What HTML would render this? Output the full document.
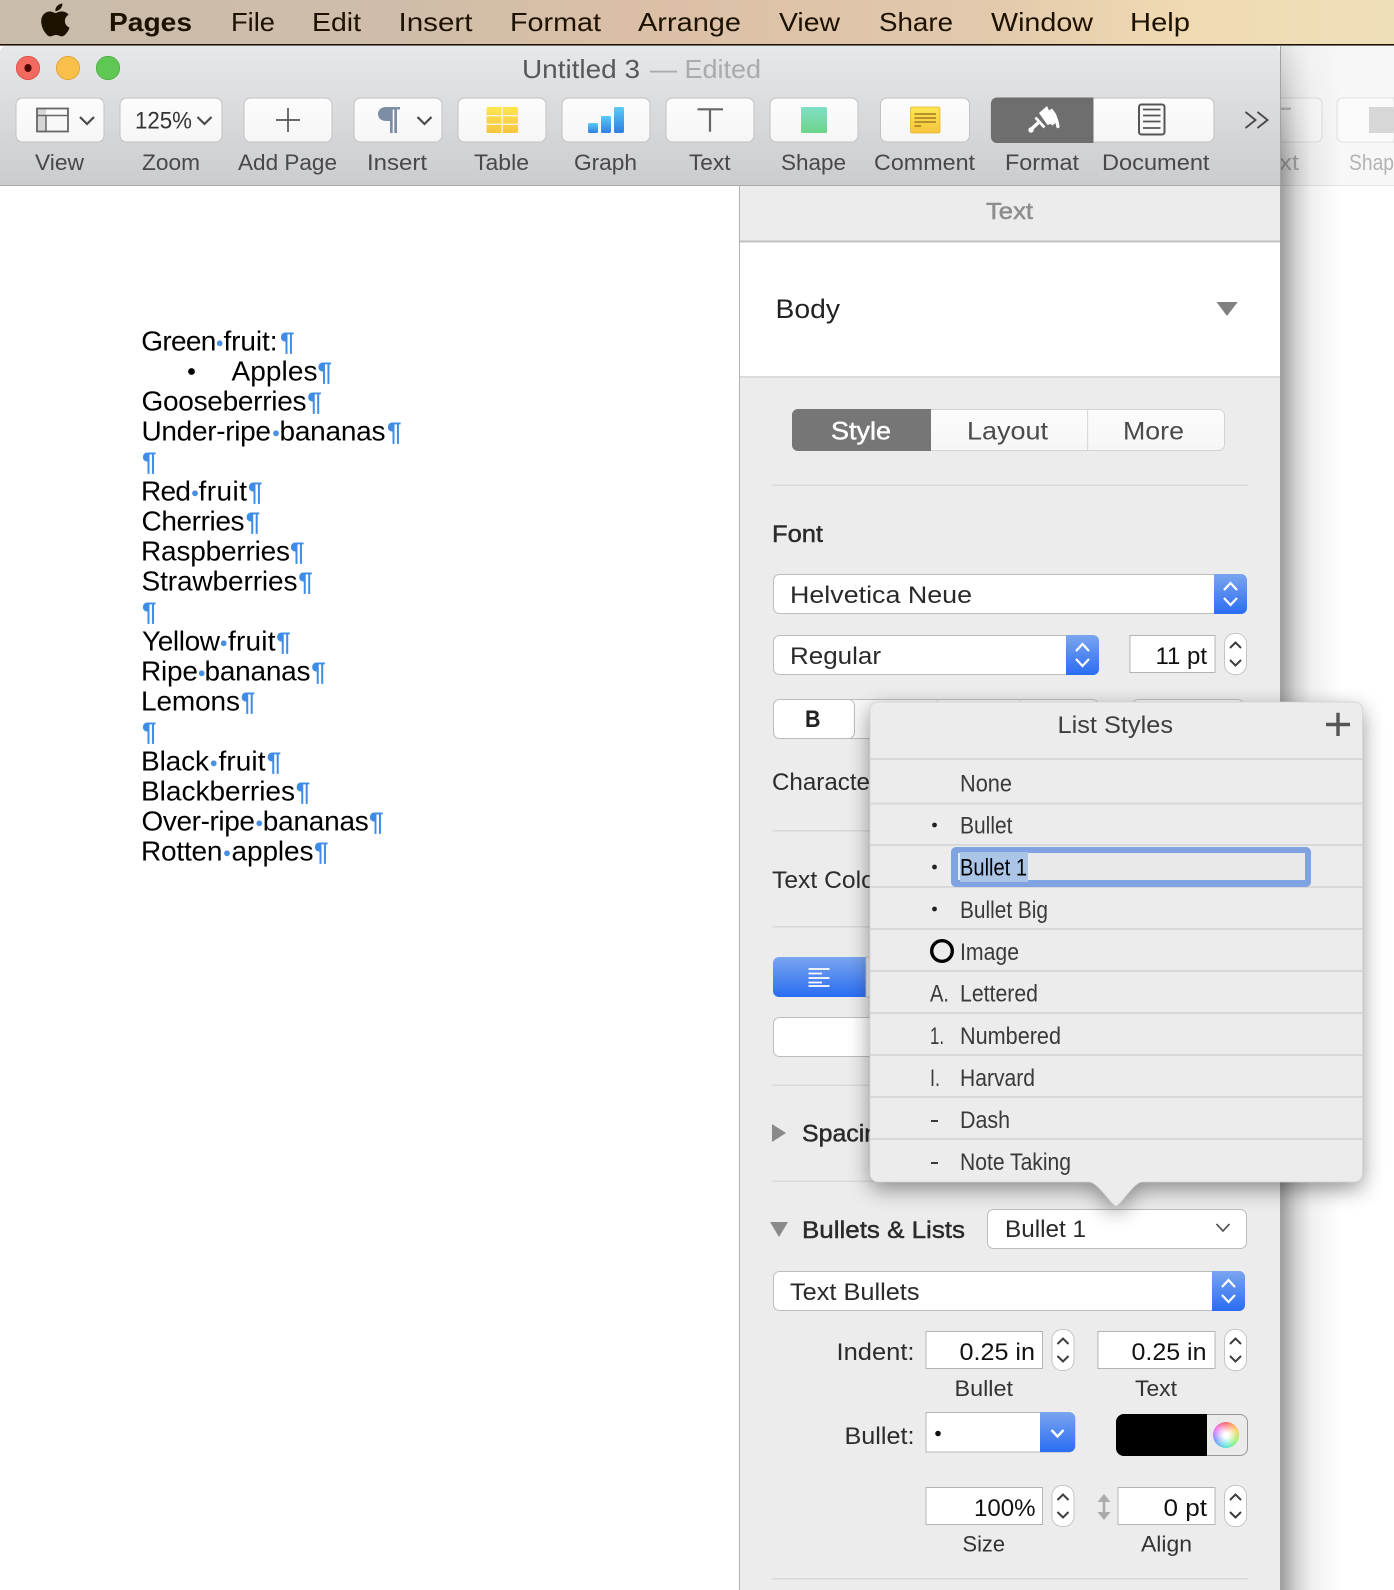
<!DOCTYPE html>
<html><head><meta charset="utf-8"><title>Pages</title>
<style>
html,body{margin:0;padding:0;background:#fff;overflow:hidden}
body{position:relative;width:1394px;height:1590px;overflow:hidden}
svg{position:absolute;left:0;top:0;display:block}
text{font-family:"Liberation Sans",sans-serif}
.m{font-size:26px;fill:#1d1100}
.l{font-size:22px;fill:#48484a}
.p{font-size:24px;fill:#2c2c2c}
.v{font-size:24.5px;fill:#111}
.r{font-size:24px;fill:#3a3a3a}
.h{font-size:24px;fill:#2a2a2a;stroke:#2a2a2a;stroke-width:.45px}
.d{font-size:28px;fill:#000}
.q{font-size:26px;fill:#3f8ce6;font-weight:bold}
.o{fill:#4a90e2}
#wheel{position:absolute;left:1213px;top:1422px;width:26px;height:26px;border-radius:50%;background:radial-gradient(circle,#fff 0 12%,rgba(255,255,255,0) 88%),conic-gradient(#f33 0deg,#fb2 60deg,#7e3 120deg,#2dc 180deg,#47f 240deg,#d4e 300deg,#f33 360deg)}
</style></head><body>
<svg width="1394" height="1590" viewBox="0 0 1394 1590" xmlns="http://www.w3.org/2000/svg">
<defs>
<linearGradient id="menu" x1="0" x2="1" y1="0" y2="0"><stop offset="0" stop-color="#c9bcaa"/><stop offset=".28" stop-color="#cfbda9"/><stop offset=".45" stop-color="#dabfa6"/><stop offset=".7" stop-color="#e2c8ac"/><stop offset=".85" stop-color="#f0dab2"/><stop offset="1" stop-color="#efdfb9"/></linearGradient>
<linearGradient id="tb" x1="0" x2="0" y1="0" y2="1"><stop offset="0" stop-color="#e7e8ea"/><stop offset="1" stop-color="#cbccce"/></linearGradient>
<linearGradient id="btn" x1="0" x2="0" y1="0" y2="1"><stop offset="0" stop-color="#fcfcfc"/><stop offset="1" stop-color="#f6f6f6"/></linearGradient>
<linearGradient id="blue" x1="0" x2="0" y1="0" y2="1"><stop offset="0" stop-color="#7aa5ef"/><stop offset="1" stop-color="#2a6df3"/></linearGradient>
<linearGradient id="yel" x1="0" x2="0" y1="0" y2="1"><stop offset="0" stop-color="#fee64f"/><stop offset="1" stop-color="#f7c53f"/></linearGradient>
<linearGradient id="bar" x1="0" x2="0" y1="0" y2="1"><stop offset="0" stop-color="#5ccaf6"/><stop offset="1" stop-color="#2e7fe0"/></linearGradient>
<linearGradient id="grn" x1="0" x2="0" y1="0" y2="1"><stop offset="0" stop-color="#80e0c6"/><stop offset="1" stop-color="#6bd488"/></linearGradient>
<linearGradient id="sh" gradientUnits="userSpaceOnUse" x1="1281" x2="1341" y1="0" y2="0"><stop offset="0" stop-color="#000" stop-opacity=".38"/><stop offset=".1" stop-color="#000" stop-opacity=".3"/><stop offset=".25" stop-color="#000" stop-opacity=".18"/><stop offset=".5" stop-color="#000" stop-opacity=".06"/><stop offset="1" stop-color="#000" stop-opacity="0"/></linearGradient>
<linearGradient id="fade" gradientUnits="userSpaceOnUse" x1="0" x2="0" y1="46" y2="170"><stop offset="0" stop-color="#fff" stop-opacity=".25"/><stop offset="1" stop-color="#fff" stop-opacity="1"/></linearGradient>
<mask id="fm" maskUnits="userSpaceOnUse" x="1281" y="46" width="113" height="1544"><rect x="1281" y="46" width="113" height="1544" fill="url(#fade)"/></mask>
<filter id="b2" x="-20%" y="-20%" width="140%" height="140%"><feGaussianBlur stdDeviation="11"/></filter>
<g id="st"><rect x=".5" y=".5" width="22" height="41" rx="10" fill="#fff" stroke="#c4c4c4"/><path d="M6 15L11.5 9.5L17 15M6 27L11.5 32.5L17 27" fill="none" stroke="#3c3c3c" stroke-width="2"/></g>
<path id="ud" d="M0 7L6.5 0L13 7M0 15L6.5 22L13 15" fill="none" stroke="#fff" stroke-width="2.2"/>
<path id="ch" d="M0 0L7 7L14 0" fill="none" stroke="#4a4a4a" stroke-width="2.2"/>
</defs>

<!-- desktop / ghost window -->
<rect width="1394" height="1590" fill="#fff"/>
<rect x="1270" y="46" width="124" height="139" fill="#f7f7f7"/>
<rect x="1270" y="185" width="124" height="1" fill="#e4e4e4"/>
<rect x="1240" y="98" width="82" height="44" rx="6" fill="#fbfbfb" stroke="#dfdfdf"/>
<path d="M1394 98H1343a6 6 0 0 0-6 6V136a6 6 0 0 0 6 6H1394Z" fill="#fbfbfb" stroke="#dfdfdf"/>
<rect x="1369" y="107" width="25" height="26" fill="#d7d7d7"/>
<rect x="1279" y="107.5" width="12" height="2.5" fill="#c6c6c6"/>
<text x="1279" y="170" class="l" style="fill:#b4b4b4" textLength="20" lengthAdjust="spacingAndGlyphs">xt</text>
<text x="1349" y="170" class="l" style="fill:#b4b4b4" textLength="45" lengthAdjust="spacingAndGlyphs">Shap</text>

<!-- main window shadow -->
<rect x="1281" y="46" width="113" height="1544" fill="url(#sh)" mask="url(#fm)"/>

<!-- menu bar -->
<rect width="1394" height="44" fill="url(#menu)"/>
<rect y="44" width="1394" height="1.6" fill="#1a1208"/>
<path transform="translate(38 3.5) scale(1.45 1.37)" fill="#1d1100" d="M12.152 6.896c-.948 0-2.415-1.078-3.96-1.04-2.04.027-3.91 1.183-4.961 3.014-2.117 3.675-.546 9.103 1.519 12.09 1.013 1.454 2.208 3.09 3.792 3.039 1.52-.065 2.09-.987 3.935-.987 1.831 0 2.35.987 3.96.948 1.637-.026 2.676-1.48 3.676-2.948 1.156-1.688 1.636-3.325 1.662-3.415-.039-.013-3.182-1.221-3.22-4.857-.026-3.04 2.48-4.494 2.597-4.559-1.429-2.09-3.623-2.324-4.39-2.376-2-.156-3.675 1.09-4.61 1.09zM15.53 3.83c.843-1.012 1.4-2.427 1.245-3.83-1.207.052-2.662.805-3.532 1.818-.78.896-1.454 2.338-1.273 3.714 1.338.104 2.715-.688 3.559-1.701"/>
<text x="109" y="31" class="m" font-weight="bold" textLength="83" lengthAdjust="spacingAndGlyphs">Pages</text>
<text x="231" y="31" class="m" textLength="44" lengthAdjust="spacingAndGlyphs">File</text>
<text x="312" y="31" class="m" textLength="49" lengthAdjust="spacingAndGlyphs">Edit</text>
<text x="398.5" y="31" class="m" textLength="74" lengthAdjust="spacingAndGlyphs">Insert</text>
<text x="510" y="31" class="m" textLength="91" lengthAdjust="spacingAndGlyphs">Format</text>
<text x="638" y="31" class="m" textLength="103" lengthAdjust="spacingAndGlyphs">Arrange</text>
<text x="779" y="31" class="m" textLength="61" lengthAdjust="spacingAndGlyphs">View</text>
<text x="879" y="31" class="m" textLength="74" lengthAdjust="spacingAndGlyphs">Share</text>
<text x="991" y="31" class="m" textLength="102" lengthAdjust="spacingAndGlyphs">Window</text>
<text x="1130" y="31" class="m" textLength="60" lengthAdjust="spacingAndGlyphs">Help</text>

<!-- window body -->
<path d="M0 186V52a6 6 0 0 1 6-6H1274a6 6 0 0 1 6 6V186Z" fill="url(#tb)"/>
<rect y="185" width="1280" height="1.4" fill="#a9a9a9"/>
<rect y="186" width="739" height="1404" fill="#fff"/>
<rect x="739" y="186" width="1.4" height="1404" fill="#b3b3b3"/>
<rect x="740" y="186" width="540" height="1404" fill="#ececec"/>
<rect x="1280" y="46" width="1" height="1544" fill="#a2a2a2"/>

<!-- traffic lights -->
<circle cx="28" cy="68" r="11.6" fill="#f4695f" stroke="#e0524a"/><ellipse cx="28" cy="68" rx="3.6" ry="4" fill="#4d0705"/>
<circle cx="68" cy="68" r="11.6" fill="#f8bf4b" stroke="#e2a63a"/>
<circle cx="108" cy="68" r="11.6" fill="#5fc854" stroke="#4fb143"/>
<text x="522" y="78" font-size="26" fill="#57585a" textLength="118" lengthAdjust="spacingAndGlyphs">Untitled 3</text>
<text x="650" y="78" font-size="26" fill="#a9aaac" textLength="111" lengthAdjust="spacingAndGlyphs">— Edited</text>

<!-- toolbar buttons -->
<g fill="url(#btn)" stroke="#c2c2c2">
<rect x="16" y="98" width="88" height="44" rx="6.5"/>
<rect x="120" y="98" width="102" height="44" rx="6.5"/>
<rect x="244" y="98" width="88" height="44" rx="6.5"/>
<rect x="354" y="98" width="88" height="44" rx="6.5"/>
<rect x="458" y="98" width="88" height="44" rx="6.5"/>
<rect x="562" y="98" width="88" height="44" rx="6.5"/>
<rect x="666" y="98" width="88" height="44" rx="6.5"/>
<rect x="770" y="98" width="88" height="44" rx="6.5"/>
<rect x="880.5" y="98" width="89" height="44" rx="6.5"/>
<rect x="991" y="98" width="223" height="44" rx="6.5"/>
</g>
<path d="M1093.5 97.5H997a6 6 0 0 0-6 6V137a6 6 0 0 0 6 6H1093.5Z" fill="#6e6e6e"/>

<!-- view icon -->
<rect x="37" y="108.5" width="9" height="23" fill="#d6d6d6"/>
<rect x="37" y="108.5" width="31" height="23" fill="none" stroke="#666" stroke-width="1.8"/>
<path d="M37 115.5H68M46 115.5V131.5" fill="none" stroke="#666" stroke-width="1.5"/>
<use href="#ch" x="80" y="117"/>
<text x="135" y="128.5" font-size="24" fill="#333" textLength="57" lengthAdjust="spacingAndGlyphs">125%</text>
<use href="#ch" x="197.5" y="117"/>
<path d="M288 108V132M276 120H300" stroke="#555" stroke-width="1.7" fill="none"/>
<!-- pilcrow icon -->
<path d="M400 107H385.5A7.5 7 0 0 0 385.5 121H390V133H392.7V109.5H394.3V133H397V109.5H400Z" fill="#7b8ea6"/>
<use href="#ch" x="417.5" y="117"/>
<!-- table -->
<rect x="486.5" y="107" width="31.5" height="26" rx="1.5" fill="url(#yel)"/>
<path d="M502.2 107V133M486.5 115.7H518M486.5 124.3H518" stroke="#fdf6d4" stroke-width="1.4"/>
<!-- graph -->
<rect x="588" y="123" width="10" height="10" rx="1.5" fill="url(#bar)"/>
<rect x="601" y="116" width="10" height="17" rx="1.5" fill="url(#bar)"/>
<rect x="614" y="107" width="10" height="26" rx="1.5" fill="url(#bar)"/>
<!-- T -->
<path d="M697.5 109.3H723M710 109.3V131.7" stroke="#666" stroke-width="2.2" fill="none"/>
<!-- shape -->
<rect x="801" y="107" width="26" height="26" rx="1.5" fill="url(#grn)"/>
<!-- comment -->
<rect x="910.5" y="107" width="29.5" height="26" rx="1.5" fill="url(#yel)" stroke="#ebb433" stroke-width=".8"/>
<path d="M914.5 114H936M914.5 118H936M914.5 122H936M914.5 126H921" stroke="#a07a22" stroke-width="1.6"/>
<!-- brush -->
<path fill="#fff" d="M1039 113L1047 106L1049 110.5L1052 108.5L1056 114L1058.5 121L1059.5 126A1.6 1.6 0 0 1 1056.3 127L1055.5 123L1052.5 125.5L1050.5 124L1047.5 125Z"/>
<path d="M1035.5 117.5L1044.5 127.5" stroke="#fff" stroke-width="2.8" fill="none"/>
<path d="M1038.5 122.5L1031.5 129" stroke="#fff" stroke-width="3.4" fill="none"/>
<circle cx="1031" cy="130" r="2.7" fill="#fff"/>
<!-- document -->
<rect x="1139" y="104.5" width="25.5" height="30" rx="2.5" fill="none" stroke="#555" stroke-width="2"/>
<path d="M1143 109.5H1160.5M1143 115.5H1160.5M1143 121.5H1160.5M1143 128H1160.5" stroke="#555" stroke-width="1.8"/>
<!-- overflow -->
<path d="M1245.5 112L1255.5 120L1245.5 128M1257.5 112L1267.5 120L1257.5 128" fill="none" stroke="#4a4a4a" stroke-width="1.9"/>

<!-- toolbar labels -->
<text x="35" y="170" class="l" textLength="49" lengthAdjust="spacingAndGlyphs">View</text>
<text x="142" y="170" class="l" textLength="58" lengthAdjust="spacingAndGlyphs">Zoom</text>
<text x="238" y="170" class="l" textLength="99" lengthAdjust="spacingAndGlyphs">Add Page</text>
<text x="367" y="170" class="l" textLength="60" lengthAdjust="spacingAndGlyphs">Insert</text>
<text x="474" y="170" class="l" textLength="55" lengthAdjust="spacingAndGlyphs">Table</text>
<text x="574" y="170" class="l" textLength="63" lengthAdjust="spacingAndGlyphs">Graph</text>
<text x="689" y="170" class="l" textLength="41.5" lengthAdjust="spacingAndGlyphs">Text</text>
<text x="781" y="170" class="l" textLength="65" lengthAdjust="spacingAndGlyphs">Shape</text>
<text x="874" y="170" class="l" textLength="101" lengthAdjust="spacingAndGlyphs">Comment</text>
<text x="1005" y="170" class="l" textLength="74" lengthAdjust="spacingAndGlyphs">Format</text>
<text x="1102" y="170" class="l" textLength="107.5" lengthAdjust="spacingAndGlyphs">Document</text>

<!-- document text -->
<g class="o">
<circle cx="219.7" cy="343.3" r="2.9"/>
<circle cx="276" cy="433.3" r="2.9"/>
<circle cx="195" cy="493.3" r="2.9"/>
<circle cx="223.7" cy="643.3" r="2.9"/>
<circle cx="201.7" cy="673.3" r="2.9"/>
<circle cx="213.7" cy="763.3" r="2.9"/>
<circle cx="259.3" cy="823.3" r="2.9"/>
<circle cx="227" cy="853.3" r="2.9"/>
</g>
<circle cx="191.5" cy="371.5" r="3.4" fill="#000"/>
<text class="d" x="141.3" y="350.7" textLength="75">Green</text><text class="d" x="223.5" y="350.7" textLength="54">fruit:</text><text class="q" x="280" y="350.7">¶</text>
<text class="d" x="231.5" y="380.7" textLength="86">Apples</text><text class="q" x="317.5" y="380.7">¶</text>
<text class="d" x="141.5" y="410.7" textLength="165">Gooseberries</text><text class="q" x="307.3" y="410.7">¶</text>
<text class="d" x="141.5" y="440.7" textLength="129.5">Under-ripe</text><text class="d" x="279.5" y="440.7" textLength="106">bananas</text><text class="q" x="387" y="440.7">¶</text>
<text class="q" x="142" y="470.7">¶</text>
<text class="d" x="141" y="500.7" textLength="50">Red</text><text class="d" x="198.5" y="500.7" textLength="48.5">fruit</text><text class="q" x="248" y="500.7">¶</text>
<text class="d" x="141.5" y="530.7" textLength="103">Cherries</text><text class="q" x="245.7" y="530.7">¶</text>
<text class="d" x="141" y="560.7" textLength="149">Raspberries</text><text class="q" x="290" y="560.7">¶</text>
<text class="d" x="141.5" y="590.7" textLength="156">Strawberries</text><text class="q" x="298.3" y="590.7">¶</text>
<text class="q" x="142" y="620.7">¶</text>
<text class="d" x="142" y="650.7" textLength="78">Yellow</text><text class="d" x="228" y="650.7" textLength="47.5">fruit</text><text class="q" x="276.3" y="650.7">¶</text>
<text class="d" x="141" y="680.7" textLength="57">Ripe</text><text class="d" x="204.5" y="680.7" textLength="106">bananas</text><text class="q" x="311.3" y="680.7">¶</text>
<text class="d" x="141" y="710.7" textLength="99">Lemons</text><text class="q" x="240.7" y="710.7">¶</text>
<text class="q" x="142" y="740.7">¶</text>
<text class="d" x="141" y="770.7" textLength="68">Black</text><text class="d" x="218.5" y="770.7" textLength="47">fruit</text><text class="q" x="266.7" y="770.7">¶</text>
<text class="d" x="141" y="800.7" textLength="154">Blackberries</text><text class="q" x="295.7" y="800.7">¶</text>
<text class="d" x="141.5" y="830.7" textLength="113.5">Over-ripe</text><text class="d" x="262.8" y="830.7" textLength="106">bananas</text><text class="q" x="369" y="830.7">¶</text>
<text class="d" x="141" y="860.7" textLength="81.5">Rotten</text><text class="d" x="231.5" y="860.7" textLength="82">apples</text><text class="q" x="314" y="860.7">¶</text>

<!-- panel -->
<text x="986" y="219" font-size="23" fill="#8d8d8f" stroke="#8d8d8f" stroke-width=".5" textLength="47" lengthAdjust="spacingAndGlyphs">Text</text>
<rect x="740" y="240.5" width="540" height="2" fill="#c0c1c3"/>
<rect x="740" y="242.5" width="540" height="134" fill="#fff"/>
<rect x="740" y="376" width="540" height="2" fill="#dcdcdc"/>
<text x="775.5" y="318" font-size="27" fill="#222" textLength="64.5" lengthAdjust="spacingAndGlyphs">Body</text>
<path d="M1216.5 302H1237.7L1227 316Z" fill="#808080"/>

<rect x="792.5" y="409.5" width="432" height="41" rx="6" fill="url(#btn)" stroke="#d3d3d3"/>
<path d="M931 409H798a6 6 0 0 0-6 6V445a6 6 0 0 0 6 6H931Z" fill="#767676"/>
<rect x="1087" y="410" width="1.2" height="40" fill="#dadada"/>
<text x="831" y="439.5" font-size="25" fill="#fff" stroke="#fff" stroke-width=".45" textLength="60" lengthAdjust="spacingAndGlyphs">Style</text>
<text x="967" y="439.5" font-size="25" fill="#4a4a4a" textLength="81" lengthAdjust="spacingAndGlyphs">Layout</text>
<text x="1123" y="439.5" font-size="25" fill="#4a4a4a" textLength="61" lengthAdjust="spacingAndGlyphs">More</text>
<rect x="772.5" y="484.5" width="475.5" height="1.6" fill="#dadada"/>
<text x="772" y="542" class="h" textLength="51" lengthAdjust="spacingAndGlyphs">Font</text>

<!-- font selects -->
<rect x="773.5" y="574.5" width="473" height="39" rx="6" fill="#fff" stroke="#bdbdbd"/>
<path d="M1214 574H1241a6 6 0 0 1 6 6V608a6 6 0 0 1-6 6H1214Z" fill="url(#blue)"/>
<use href="#ud" x="1224" y="583"/>
<text x="790" y="603" class="v" style="fill:#2a2a2a" textLength="182" lengthAdjust="spacingAndGlyphs">Helvetica Neue</text>
<rect x="773.5" y="635.5" width="325" height="39" rx="6" fill="#fff" stroke="#bdbdbd"/>
<path d="M1066 635H1093a6 6 0 0 1 6 6V669a6 6 0 0 1-6 6H1066Z" fill="url(#blue)"/>
<use href="#ud" x="1076" y="644"/>
<text x="790" y="664" class="v" style="fill:#2a2a2a" textLength="91" lengthAdjust="spacingAndGlyphs">Regular</text>
<rect x="1130" y="635.5" width="85" height="37" fill="#fff" stroke="#b4b4b4"/>
<text x="1155.5" y="664" class="v" textLength="51.5" lengthAdjust="spacingAndGlyphs">11 pt</text>
<use href="#st" x="1224" y="633"/>

<!-- B/I/U row -->
<rect x="773.5" y="699.5" width="325" height="39" rx="6" fill="#f8f8f8" stroke="#bdbdbd"/>
<rect x="773.5" y="699.5" width="81" height="39" rx="6" fill="#fff" stroke="#bdbdbd"/>
<rect x="937" y="699" width="1" height="4" fill="#cfcfcf"/>
<rect x="1019" y="699" width="1" height="4" fill="#cfcfcf"/>
<rect x="1132.5" y="699.5" width="111" height="39" rx="6" fill="#f8f8f8" stroke="#bdbdbd"/>
<text x="805" y="727" font-size="24" font-weight="bold" fill="#222" textLength="15.5" lengthAdjust="spacingAndGlyphs">B</text>

<text x="772" y="790" class="p" textLength="106" lengthAdjust="spacingAndGlyphs">Character</text>
<rect x="772.5" y="830" width="120" height="1.6" fill="#dadada"/>
<text x="772" y="888" class="p" textLength="111" lengthAdjust="spacingAndGlyphs">Text Color</text>
<rect x="772.5" y="926" width="120" height="1.6" fill="#dadada"/>

<path d="M866 957H779a6 6 0 0 0-6 6V991a6 6 0 0 0 6 6H866Z" fill="url(#blue)"/>
<path d="M808.5 969H829.5M808.5 973.5H822M808.5 978H829.5M808.5 982.5H822M808.5 986H829.5" stroke="#fff" stroke-width="1.8"/>
<rect x="866" y="957" width="20" height="40" fill="#f4f4f4" stroke="#c9c9c9"/>
<rect x="773.5" y="1017.5" width="130" height="39" rx="6" fill="#fff" stroke="#bdbdbd"/>
<rect x="772.5" y="1084.5" width="120" height="1.6" fill="#dadada"/>
<path d="M772 1124L786 1133L772 1142Z" fill="#8a8a8a"/>
<text x="802" y="1141.7" class="h" textLength="90" lengthAdjust="spacingAndGlyphs">Spacing</text>
<rect x="772.5" y="1180.5" width="475.5" height="1.6" fill="#dadada"/>

<!-- bullets & lists -->
<path d="M770 1222H788L779 1237Z" fill="#8a8a8a"/>
<text x="802" y="1238" class="h" textLength="163" lengthAdjust="spacingAndGlyphs">Bullets &amp; Lists</text>
<rect x="987.5" y="1209.5" width="259" height="39" rx="6" fill="#fff" stroke="#bdbdbd"/>
<text x="1005" y="1237" class="v" style="fill:#2a2a2a" textLength="81" lengthAdjust="spacingAndGlyphs">Bullet 1</text>
<path d="M1216.5 1224L1223 1231L1229.5 1224" fill="none" stroke="#555" stroke-width="1.7"/>

<rect x="773.5" y="1271.5" width="471" height="39" rx="6" fill="#fff" stroke="#bdbdbd"/>
<path d="M1212 1271H1239a6 6 0 0 1 6 6V1305a6 6 0 0 1-6 6H1212Z" fill="url(#blue)"/>
<use href="#ud" x="1222" y="1280"/>
<text x="790" y="1300" class="v" style="fill:#2a2a2a" textLength="129.5" lengthAdjust="spacingAndGlyphs">Text Bullets</text>

<text x="836.5" y="1360" class="p" textLength="78" lengthAdjust="spacingAndGlyphs">Indent:</text>
<rect x="926" y="1331.5" width="116.5" height="37" fill="#fff" stroke="#b4b4b4"/>
<text x="959.5" y="1360" class="v" textLength="75.5" lengthAdjust="spacingAndGlyphs">0.25 in</text>
<use href="#st" x="1051.5" y="1329"/>
<rect x="1098" y="1331.5" width="117" height="37" fill="#fff" stroke="#b4b4b4"/>
<text x="1131.5" y="1360" class="v" textLength="75" lengthAdjust="spacingAndGlyphs">0.25 in</text>
<use href="#st" x="1224" y="1329"/>
<text x="954.5" y="1396" font-size="22.5" fill="#333" textLength="58.5" lengthAdjust="spacingAndGlyphs">Bullet</text>
<text x="1135" y="1396" font-size="22.5" fill="#333" textLength="42" lengthAdjust="spacingAndGlyphs">Text</text>

<text x="844.5" y="1444" class="p" textLength="70" lengthAdjust="spacingAndGlyphs">Bullet:</text>
<path d="M926 1412.5H1069a6 6 0 0 1 6 6V1446a6 6 0 0 1-6 6H926Z" fill="#fff" stroke="#b4b4b4"/>
<path d="M1040 1412H1069a6 6 0 0 1 6 6V1446a6 6 0 0 1-6 6H1040Z" fill="url(#blue)"/>
<path d="M1051.5 1430L1057.5 1436.5L1063.5 1430" fill="none" stroke="#fff" stroke-width="2.4"/>
<circle cx="938" cy="1433.5" r="2.8" fill="#111"/>
<path d="M1124 1414.5H1240a7.5 7.5 0 0 1 7.5 7.5V1448a7.5 7.5 0 0 1-7.5 7.5H1124a7.5 7.5 0 0 1-7.5-7.5V1422a7.5 7.5 0 0 1 7.5-7.5Z" fill="#ebebeb" stroke="#989898"/>
<path d="M1207 1414H1124a8 8 0 0 0-8 8V1448a8 8 0 0 0 8 8H1207Z" fill="#000"/>

<rect x="926" y="1487.5" width="116.5" height="37" fill="#fff" stroke="#b4b4b4"/>
<text x="974" y="1516" class="v" textLength="61.5" lengthAdjust="spacingAndGlyphs">100%</text>
<use href="#st" x="1051.5" y="1485"/>
<path d="M1104 1494L1110.5 1502H1105.3V1512H1110.5L1104 1520L1097.5 1512H1102.7V1502H1097.5Z" fill="#ababab"/>
<rect x="1118" y="1487.5" width="97" height="37" fill="#fff" stroke="#b4b4b4"/>
<text x="1163.5" y="1516" class="v" textLength="43.5" lengthAdjust="spacingAndGlyphs">0 pt</text>
<use href="#st" x="1224" y="1485"/>
<text x="962.5" y="1551.7" font-size="22.5" fill="#333" textLength="42.5" lengthAdjust="spacingAndGlyphs">Size</text>
<text x="1141" y="1551.7" font-size="22.5" fill="#333" textLength="51" lengthAdjust="spacingAndGlyphs">Align</text>
<rect x="772.5" y="1578" width="475.5" height="1.6" fill="#dadada"/>

<!-- popover -->
<path transform="translate(0 7)" filter="url(#b2)" opacity=".42" fill="#000" d="M878 702H1354.5a8 8 0 0 1 8 8V1174a8 8 0 0 1-8 8H1142C1134 1182 1120 1206 1116 1206C1112 1206 1098 1182 1089 1182H878a8 8 0 0 1-8-8V710a8 8 0 0 1 8-8Z"/>
<path fill="#ececec" stroke="#d2d2d2" stroke-width=".7" d="M878 702H1354.5a8 8 0 0 1 8 8V1174a8 8 0 0 1-8 8H1142C1134 1182 1120 1206 1116 1206C1112 1206 1098 1182 1089 1182H878a8 8 0 0 1-8-8V710a8 8 0 0 1 8-8Z"/>
<text x="1057.5" y="733" font-size="24" fill="#3e3e3e" textLength="115.5" lengthAdjust="spacingAndGlyphs">List Styles</text>
<path d="M1338 712.7V736M1326 724.5H1350" stroke="#555" stroke-width="3.4"/>
<g fill="#d8d8d8">
<rect x="870" y="758" width="492.5" height="2"/>
<rect x="870" y="802.5" width="492.5" height="2"/>
<rect x="870" y="844" width="492.5" height="2"/>
<rect x="870" y="886" width="492.5" height="2"/>
<rect x="870" y="928" width="492.5" height="2"/>
<rect x="870" y="970" width="492.5" height="2"/>
<rect x="870" y="1012" width="492.5" height="2"/>
<rect x="870" y="1054" width="492.5" height="2"/>
<rect x="870" y="1096" width="492.5" height="2"/>
<rect x="870" y="1138" width="492.5" height="2"/>
</g>
<text x="960" y="791.7" class="r" textLength="52" lengthAdjust="spacingAndGlyphs">None</text>
<text x="960" y="833.7" class="r" textLength="52.5" lengthAdjust="spacingAndGlyphs">Bullet</text>
<circle cx="934.5" cy="825" r="2.4" fill="#222"/>
<circle cx="934.5" cy="867" r="2.4" fill="#222"/>
<rect x="951" y="847" width="360" height="40" rx="5" fill="#7fa2e0"/>
<rect x="958" y="853" width="347" height="27" fill="#e9e9e9"/>
<rect x="960" y="852" width="68" height="30" fill="#abc5e7"/>
<text x="960" y="875.7" font-size="24" fill="#000" textLength="67" lengthAdjust="spacingAndGlyphs">Bullet 1</text>
<text x="960" y="918" class="r" textLength="88" lengthAdjust="spacingAndGlyphs">Bullet Big</text>
<circle cx="934.5" cy="909" r="2.4" fill="#222"/>
<circle cx="942" cy="951" r="10.3" fill="none" stroke="#000" stroke-width="3.4"/>
<text x="960" y="960" class="r" textLength="59" lengthAdjust="spacingAndGlyphs">Image</text>
<text x="930" y="1001.7" class="r" textLength="19" lengthAdjust="spacingAndGlyphs">A.</text>
<text x="960" y="1001.7" class="r" textLength="78" lengthAdjust="spacingAndGlyphs">Lettered</text>
<text x="930" y="1044" class="r" textLength="14" lengthAdjust="spacingAndGlyphs">1.</text>
<text x="960" y="1044" class="r" textLength="101" lengthAdjust="spacingAndGlyphs">Numbered</text>
<text x="930" y="1086" class="r" textLength="10" lengthAdjust="spacingAndGlyphs">I.</text>
<text x="960" y="1086" class="r" textLength="75" lengthAdjust="spacingAndGlyphs">Harvard</text>
<rect x="931" y="1120" width="7" height="2" fill="#3a3a3a"/>
<text x="960" y="1128" class="r" textLength="50" lengthAdjust="spacingAndGlyphs">Dash</text>
<rect x="931" y="1162" width="7" height="2" fill="#3a3a3a"/>
<text x="960" y="1170" class="r" textLength="111" lengthAdjust="spacingAndGlyphs">Note Taking</text>
</svg>
<div id="wheel"></div>
</body></html>
